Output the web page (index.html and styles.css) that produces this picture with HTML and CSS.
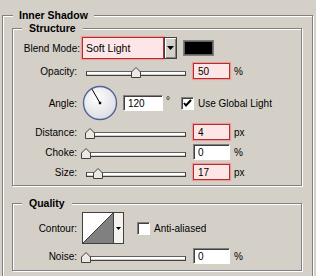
FILE: index.html
```html
<!DOCTYPE html>
<html lang="en">
<head>
    <meta charset="UTF-8">
    <title>Inner Shadow</title>
    <link rel="stylesheet" href="styles.css">
</head>
<body>
    <fieldset class="group outer">
        <legend>Inner Shadow</legend>

        <fieldset class="group structure">
            <legend>Structure</legend>

            <div class="row row-blend">
                <span class="lbl lbl-wide">Blend Mode:</span>
                <div class="select">
                    <span class="select-value">Soft Light</span>
                    <span class="select-drop">
                        <svg width="7" height="4" viewBox="0 0 7 4"><polygon points="0,0 7,0 3.5,4" fill="#000"/></svg>
                    </span>
                </div>
                <span class="swatch"></span>
            </div>

            <div class="row row-field">
                <span class="lbl">Opacity:</span>
                <div class="slider">
                    <div class="track"></div>
                    <svg class="thumb" style="left: 49px" width="10" height="11" viewBox="0 0 10 11"><polygon points="0.5,10.5 0.5,5 5,0.5 9.5,5 9.5,10.5" fill="#ece9e2" stroke="#404040"/></svg>
                </div>
                <input class="num hot" type="text" value="50">
                <span class="unit">%</span>
            </div>

            <div class="row row-angle">
                <span class="lbl">Angle:</span>
                <svg class="dial" width="36" height="36" viewBox="0 0 36 36">
                    <defs>
                        <radialGradient id="dialfill" cx="0.4" cy="0.35" r="0.75">
                            <stop offset="0" stop-color="#ffffff"/>
                            <stop offset="1" stop-color="#d8d8e0"/>
                        </radialGradient>
                    </defs>
                    <circle cx="18" cy="18" r="16.5" fill="url(#dialfill)" stroke="#4e6496" stroke-width="1.4"/>
                    <line x1="18" y1="18" x2="10" y2="4.2" stroke="#000" stroke-width="1"/>
                    <rect x="16.8" y="16.8" width="2.4" height="2.4" fill="#000"/>
                </svg>
                <input class="num num-angle" type="text" value="120">
                <span class="deg">°</span>
                <span class="chk checked">
                    <svg width="9" height="9" viewBox="0 0 9 9"><polyline points="1,4 3,6.5 8,1" fill="none" stroke="#000" stroke-width="2"/></svg>
                </span>
                <span class="chk-text">Use Global Light</span>
            </div>

            <div class="row row-field row-distance">
                <span class="lbl">Distance:</span>
                <div class="slider">
                    <div class="track"></div>
                    <svg class="thumb" style="left: 3px" width="10" height="11" viewBox="0 0 10 11"><polygon points="0.5,10.5 0.5,5 5,0.5 9.5,5 9.5,10.5" fill="#ece9e2" stroke="#404040"/></svg>
                </div>
                <input class="num hot" type="text" value="4">
                <span class="unit">px</span>
            </div>

            <div class="row row-field">
                <span class="lbl">Choke:</span>
                <div class="slider">
                    <div class="track"></div>
                    <svg class="thumb" style="left: -1px" width="10" height="11" viewBox="0 0 10 11"><polygon points="0.5,10.5 0.5,5 5,0.5 9.5,5 9.5,10.5" fill="#ece9e2" stroke="#404040"/></svg>
                </div>
                <input class="num" type="text" value="0">
                <span class="unit">%</span>
            </div>

            <div class="row row-field">
                <span class="lbl">Size:</span>
                <div class="slider">
                    <div class="track"></div>
                    <svg class="thumb" style="left: 11px" width="10" height="11" viewBox="0 0 10 11"><polygon points="0.5,10.5 0.5,5 5,0.5 9.5,5 9.5,10.5" fill="#ece9e2" stroke="#404040"/></svg>
                </div>
                <input class="num hot" type="text" value="17">
                <span class="unit">px</span>
            </div>
        </fieldset>

        <fieldset class="group quality">
            <legend>Quality</legend>

            <div class="row row-contour">
                <span class="lbl">Contour:</span>
                <div class="contour">
                    <svg class="contour-preview" width="30" height="30" viewBox="0 0 30 30">
                        <rect width="30" height="30" fill="#fff"/>
                        <polygon points="0,30 30,0 30,30" fill="#808080"/>
                        <line x1="0" y1="30" x2="30" y2="0" stroke="#404040" stroke-width="1"/>
                    </svg>
                    <span class="contour-drop">
                        <svg width="5" height="3" viewBox="0 0 5 3"><polygon points="0,0 5,0 2.5,3" fill="#000"/></svg>
                    </span>
                </div>
                <span class="chk chk-aa"></span>
                <span class="chk-text">Anti-aliased</span>
            </div>

            <div class="row row-field">
                <span class="lbl">Noise:</span>
                <div class="slider slider-wide">
                    <div class="track"></div>
                    <svg class="thumb" style="left: 3px" width="10" height="11" viewBox="0 0 10 11"><polygon points="0.5,10.5 0.5,5 5,0.5 9.5,5 9.5,10.5" fill="#ece9e2" stroke="#404040"/></svg>
                </div>
                <input class="num" type="text" value="0">
                <span class="unit">%</span>
            </div>
        </fieldset>
    </fieldset>
</body>
</html>
```

FILE: styles.css
```css
html, body {
    margin: 0;
    overflow: hidden;
}

body {
    width: 316px;
    height: 276px;
    background-color: #d4d0c8;
    font-family: "Liberation Sans", Arial, sans-serif;
    font-size: 10px;
    color: #000;
}

/* etched group boxes */
.group {
    margin: 0;
    padding: 0;
    min-inline-size: 0;
    box-sizing: border-box;
    border: 1px solid #808080;
    box-shadow: inset 1px 1px 0 #fff, 1px 1px 0 #fff;
}

.group > legend {
    font-weight: bold;
    font-size: 10.5px;
    line-height: 13px;
    padding: 0 7px;
    margin-left: 9px;
    background-color: #d4d0c8;
}

.outer {
    margin: 9px 0 0 2px;
    width: 311px;
    padding: 0 0 30px 9px;
}

.outer > legend {
    margin-left: 1px;
    padding: 0 6px;
}

.structure {
    width: 290px;
    padding: 2px 0 5px 0;
}

.quality {
    width: 290px;
    margin-top: 11px;
    padding: 2px 0 6px 0;
}

/* rows */
.row {
    display: flex;
    align-items: center;
    margin-top: 4px;
}

.row-blend {
    height: 22px;
    margin-top: 0;
}

.row-field {
    height: 16px;
}

.row-angle {
    height: 36px;
    margin-top: 6px;
}

.row-distance {
    margin-top: 3px;
}

.row-contour {
    height: 32px;
    margin-top: 0;
}

.lbl {
    flex: none;
    width: 64px;
    margin-right: 5px;
    text-align: right;
    white-space: nowrap;
}

.lbl-wide {
    margin-right: 2px;
    margin-left: -3px;
    width: 70px;
}

/* blend mode select */
.select {
    display: flex;
    width: 95px;
    height: 22px;
    box-sizing: border-box;
}

.select-value {
    flex: 1;
    background-color: #ffe6e6;
    border: 1px solid #a83232;
    box-shadow: 0 0 1px 1px #f29a9a;
    padding-left: 3px;
    line-height: 20px;
    font-size: 10.5px;
}

.select-drop {
    width: 13px;
    box-sizing: border-box;
    display: flex;
    align-items: center;
    justify-content: center;
    background-color: #d4d0c8;
    border: 1px solid #404040;
    box-shadow: inset 1px 1px 0 #fff, inset -1px -1px 0 #808080;
}

.swatch {
    width: 31px;
    height: 16px;
    box-sizing: border-box;
    margin-left: 6px;
    background-color: #000;
    border: 1px solid #808080;
    box-shadow: inset 0 0 0 1px #606060;
}

/* sliders */
.slider {
    position: relative;
    flex: none;
    width: 104px;
    height: 16px;
}

.slider-wide {
    width: 108px;
    margin-left: -4px;
}

.track {
    margin: 8px 0 0 4px;
    height: 5px;
    box-sizing: border-box;
    background-color: #fff;
    border: 1px solid #404040;
    border-top-color: #606060;
    box-shadow: inset 0 -1px 0 #d4d0c8;
}

.thumb {
    position: absolute;
    top: 4px;
}

/* number fields */
.num {
    flex: none;
    width: 37px;
    height: 16px;
    box-sizing: border-box;
    margin: 0 0 0 7px;
    padding: 0 0 0 4px;
    font: inherit;
    line-height: 14px;
    color: #000;
    background-color: #fff;
    border: 1px solid;
    border-color: #808080 #fff #fff #808080;
    box-shadow: inset 1px 1px 0 #404040;
    outline: none;
}

.num.hot {
    background-color: #ffe6e6;
    border-color: #a83232;
    box-shadow: 0 0 1px 1px #f29a9a;
}

.num-angle {
    width: 40px;
    margin-left: 5px;
}

.unit {
    margin-left: 4px;
}

.deg {
    margin-left: 3px;
    align-self: flex-start;
    margin-top: 10px;
}

/* checkboxes */
.chk {
    flex: none;
    width: 13px;
    height: 13px;
    box-sizing: border-box;
    display: flex;
    align-items: center;
    justify-content: center;
    background-color: #fff;
    border: 1px solid;
    border-color: #808080 #fff #fff #808080;
    box-shadow: inset 1px 1px 0 #404040;
    margin-left: 11px;
}

.chk-aa {
    margin-left: 13px;
}

.chk-text {
    margin-left: 4px;
    white-space: nowrap;
}

/* angle dial */
.dial {
    flex: none;
    display: block;
}

/* contour picker */
.contour {
    display: flex;
    width: 42px;
    height: 32px;
    box-sizing: border-box;
    border: 1px solid #404040;
    background-color: #f4f3f0;
}

.contour-preview {
    display: block;
}

.contour-drop {
    flex: 1;
    display: flex;
    align-items: center;
    justify-content: center;
    border-left: 1px solid #404040;
}
```
